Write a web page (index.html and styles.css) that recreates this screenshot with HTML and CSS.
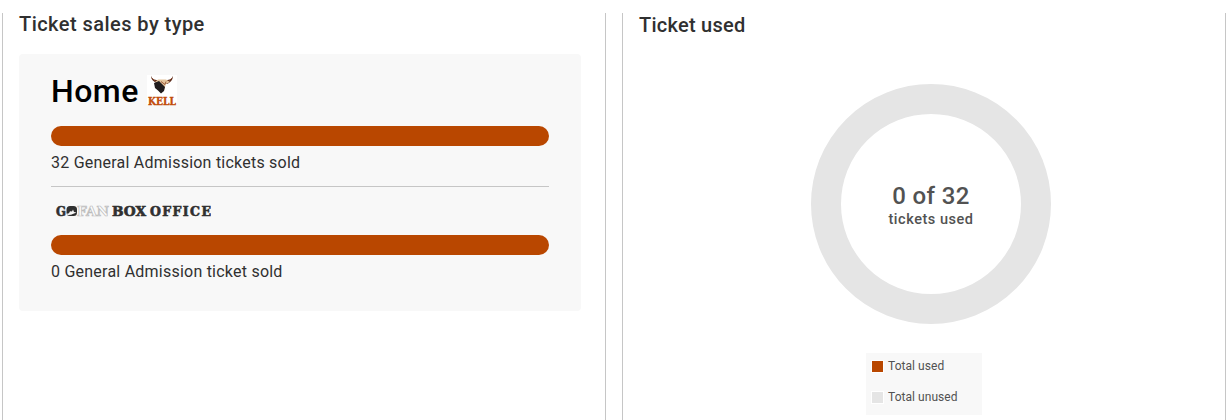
FILE: index.html
```html
<!DOCTYPE html>
<html lang="en">
<head>
<meta charset="utf-8">
<title>Ticket report</title>
<link rel="stylesheet" href="styles.css">
</head>
<body>
<main class="report">
  <section class="panel">
    <h2 class="title title-sales">Ticket sales by type</h2>
    <div class="card">
      <div class="team">
        <h1 class="team-name">Home</h1>
        <svg class="team-logo" width="30" height="30" viewBox="0 0 30 30" role="img" aria-label="Kell">
          <rect width="30" height="30" fill="#fff"/>
          <path d="M4 .8C5 4 7 5 11 5h8c4 0 6-1 7-4.200C26 5 23 8 20 9l-10-1C7 7 4 5 4 .8Z" fill="#5b2b1b"/>
          <path d="M11 4.500h8l4 2.500-4 2-2 6-4-5-5-3Z" fill="#e4c49c"/>
          <path d="M7 8l5-2 4 4 2 2-1 4-3 2.500-3-3-3-2.500Z" fill="#201c1d"/>
          <path d="M14 6.500l4 3 1-3M5 3l3 3M25 3l-3 3" fill="none" stroke="#8a4527" stroke-width=".8"/>
          <text class="kell" x="1" y="29.500" textLength="28" lengthAdjust="spacingAndGlyphs">KELL</text>
        </svg>
      </div>
      <div class="bar"></div>
      <p class="sold">32 General Admission tickets sold</p>
      <div class="divider"></div>
      <svg class="office" width="160" height="16" viewBox="0 0 160 16" role="img" aria-label="GoFan Box Office">
        <text class="slab" x="5" y="12.500" textLength="10" lengthAdjust="spacingAndGlyphs">G</text>
        <rect x="15.500" y="3" width="10.500" height="10" rx="3.500" fill="#303030"/>
        <path d="M15 11l3-.8 1-2 2 .3 1-2 1 2.500 2.500.5-2.500 1-3 1.300-3 .2Z" fill="#f8f8f8"/>
        <text class="slab outline" x="26" y="12.500" textLength="32" lengthAdjust="spacingAndGlyphs">FAN</text>
        <text class="slab" x="61" y="12.500" textLength="34" lengthAdjust="spacingAndGlyphs">BOX</text>
        <text class="slab" x="99" y="12.500" textLength="61" lengthAdjust="spacing">OFFICE</text>
      </svg>
      <div class="bar bar-office"></div>
      <p class="sold">0 General Admission ticket sold</p>
    </div>
  </section>
  <section class="panel">
    <h2 class="title title-used">Ticket used</h2>
    <div class="donut">
      <strong class="count">0 of 32</strong>
      <span class="caption">tickets used</span>
    </div>
    <ul class="legend">
      <li><i class="swatch used"></i><span>Total used</span></li>
      <li><i class="swatch"></i><span>Total unused</span></li>
    </ul>
  </section>
</main>
</body>
</html>
```
FILE: styles.css
```css
* { box-sizing: border-box; }
body { margin: 0; background: #fff; font-family: Roboto, "Liberation Sans", sans-serif; color: #303030; overflow: hidden; }
h1, h2, p, ul { margin: 0; padding: 0; }
.report { display: flex; gap: 16px; padding: 13px 2px 0; height: 420px; }
.panel { width: 604px; flex: none; border: solid #c6c6c6; border-width: 0 1px; padding: 0 24px 0 16px; }
.title { height: 24px; font-size: 20px; line-height: 22px; font-weight: 500; white-space: nowrap; }
.title-sales { letter-spacing: .45px; }
.title-used { height: 25px; letter-spacing: .25px; padding-top: 1px; }
.card { width: 562px; height: 257px; margin-top: 17px; padding: 20px 32px 0; border-radius: 4px; background: #f8f8f8; }
.team { display: flex; gap: 8px; height: 32px; }
.team-name { width: 88px; font-size: 32px; line-height: 34px; font-weight: 500; letter-spacing: .5px; color: #000; white-space: nowrap; }
.team-logo { display: block; overflow: visible; margin-top: 1px; }
.kell { font: bold 11px "DejaVu Serif", serif; fill: #c14d0b; stroke: #c14d0b; stroke-width: .4px; }
.bar { height: 20px; margin-top: 20px; border-radius: 10px; background: #b94700; }
.sold { font-size: 16px; line-height: 20px; margin-top: 7px; letter-spacing: .23px; white-space: nowrap; }
.divider { height: 1px; margin-top: 13px; background: #c6c6c6; }
.office { display: block; margin-top: 16px; }
.slab { font: bold 12.5px "DejaVu Serif", serif; fill: #303030; stroke: #303030; stroke-width: .6px; }
.outline { fill: #fcfcfc; stroke: #bcbcbc; stroke-width: .7px; }
.bar-office { margin-top: 16px; }
.donut { display: flex; flex-direction: column; align-items: center; width: 240px; height: 240px; margin: 46px 0 0 172px; padding-top: 66px; border: 30px solid #e5e5e5; border-radius: 50%; color: #525252; white-space: nowrap; }
.count { font-size: 24px; line-height: 32px; font-weight: 500; letter-spacing: .4px; }
.caption { font-size: 14.5px; line-height: 16px; font-weight: 500; letter-spacing: .53px; }
.legend { display: flex; flex-direction: column; gap: 15px; width: 116px; height: 62px; margin: 29px 0 0 227px; padding: 5px; background: #f8f8f8; list-style: none; }
.legend li { display: flex; align-items: center; gap: 4px; height: 16px; font-size: 12px; line-height: 16px; color: #525252; white-space: nowrap; letter-spacing: .05px; }
.swatch { width: 13px; height: 13px; border: 1px solid #fff; background: #e5e5e5; }
.used { background: #b94700; }
```
